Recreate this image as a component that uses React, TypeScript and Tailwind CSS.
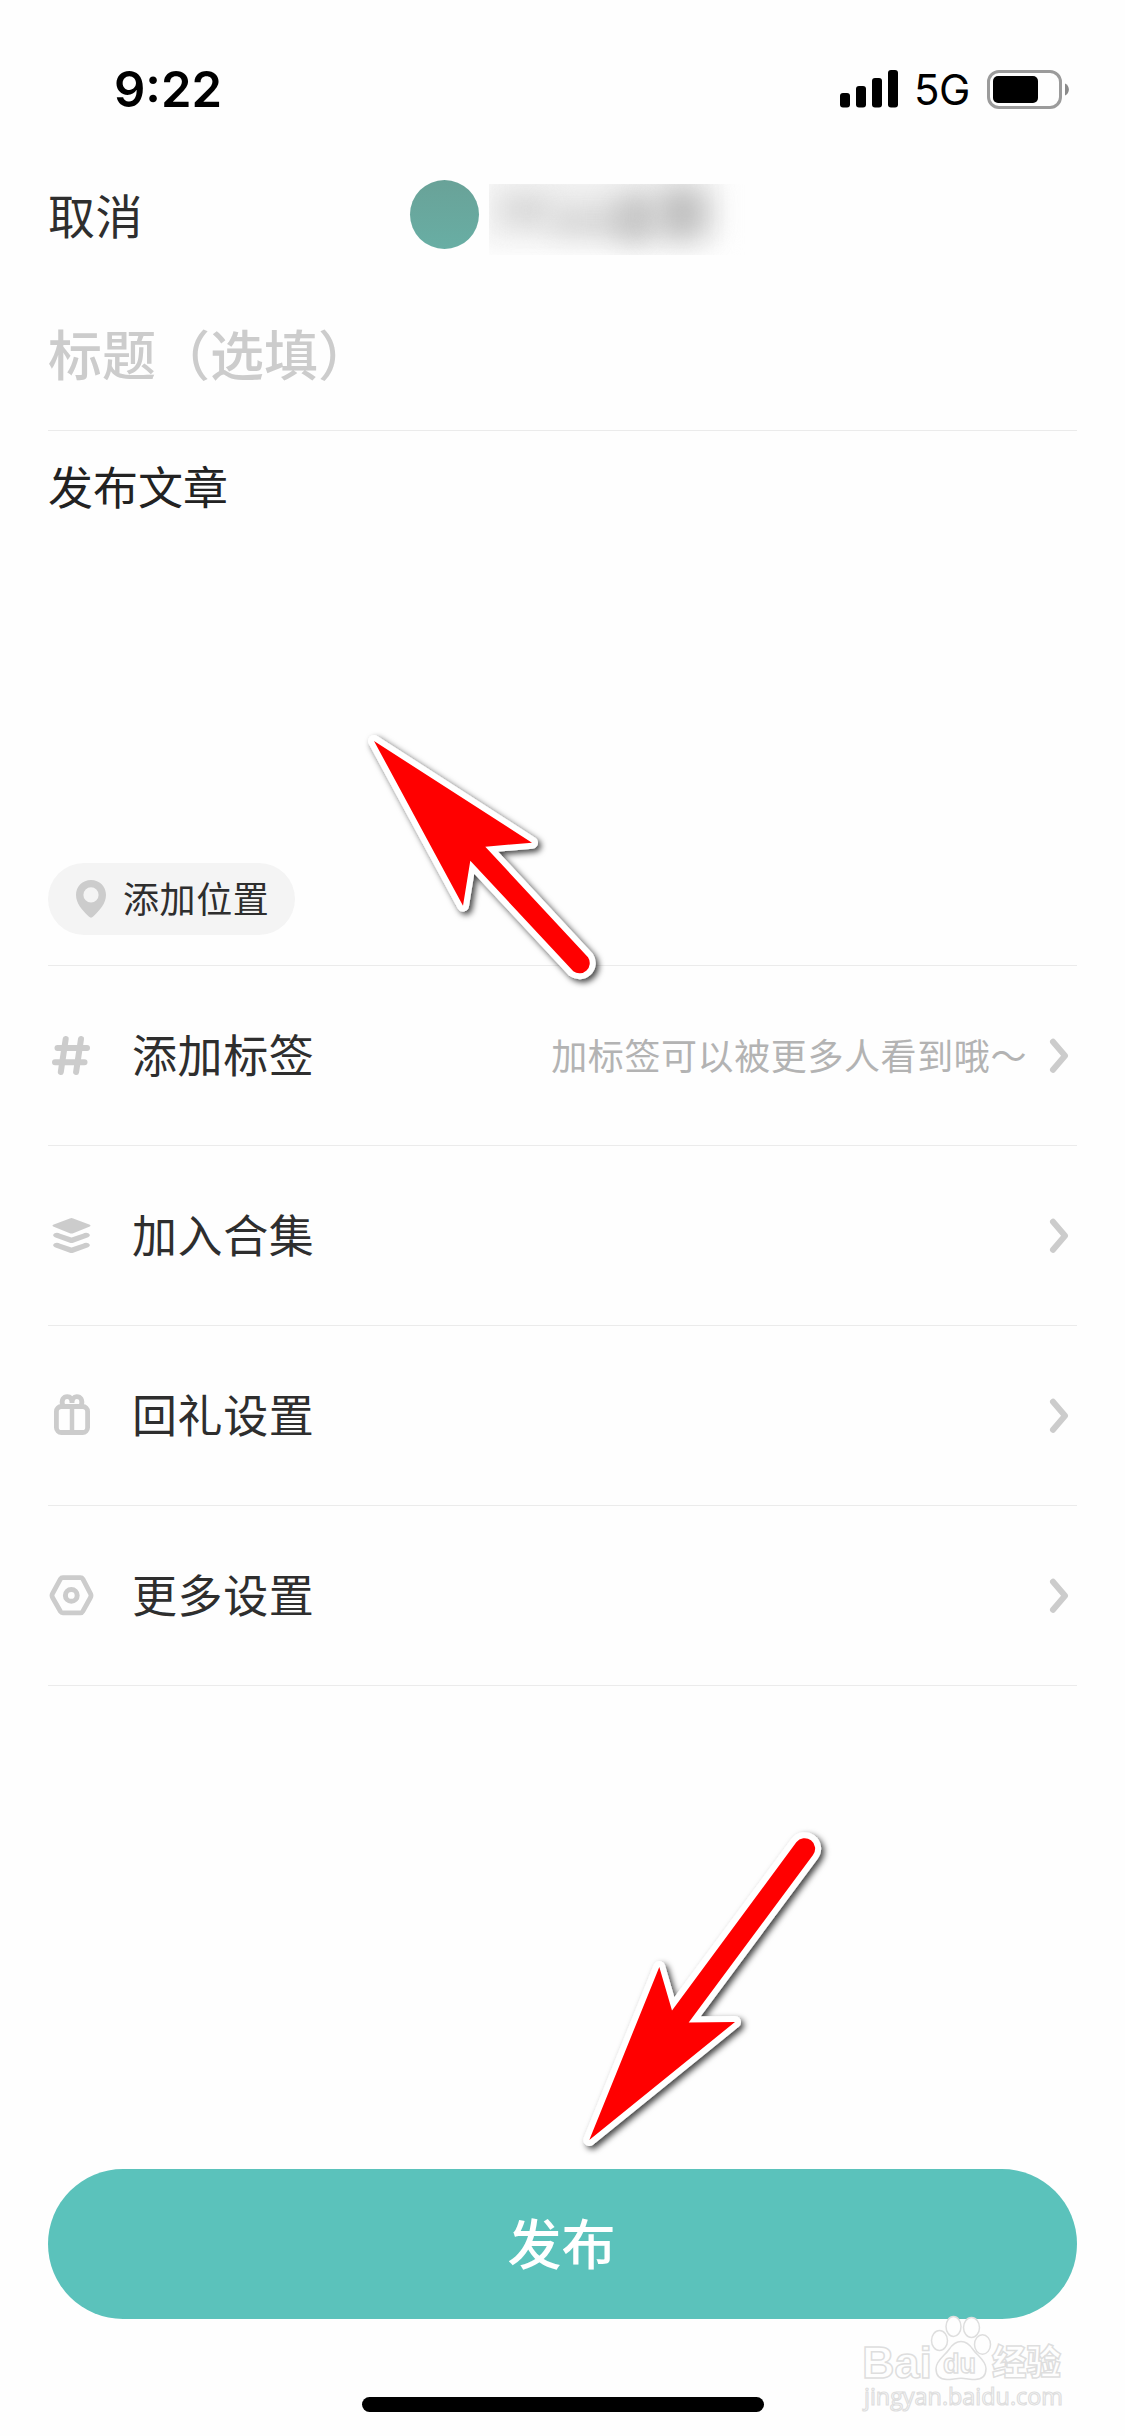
import type { ReactNode } from 'react'

const GRAY = '#cccccc'

function StatusBar() {
  return (
    <div className="flex h-[132px] shrink-0 items-start justify-between pt-[59px] pr-[56px] pl-[114px] text-black">
      <div className="pt-px font-[Inter,sans-serif] text-[49px] leading-[60px] font-semibold">9:22</div>
      <div className="flex h-[60px] items-center">
        <svg width="58" height="38" viewBox="0 0 58 38" fill="#000">
          <rect x="0" y="23" width="10" height="14.5" rx="3" />
          <rect x="16" y="16" width="10" height="21.5" rx="3" />
          <rect x="32" y="8" width="10" height="29.5" rx="3" />
          <rect x="48" y="0" width="10" height="37.5" rx="3" />
        </svg>
        <div className="ml-[16px] w-[57px] pt-[2px] font-[Inter,sans-serif] text-[42px] leading-[48px] tracking-[-0.500px]">5G</div>
        <svg className="ml-[16px]" width="82" height="39" viewBox="0 0 82 39">
          <rect x="1.5" y="1.5" width="72" height="36" rx="10.5" fill="none" stroke="#9b9b9b" strokeWidth="3" />
          <rect x="6" y="6" width="45" height="27" rx="5" fill="#000" />
          <path d="M78 13.5c5.200 2 5.200 10 0 12z" fill="#8a8a8a" />
        </svg>
      </div>
    </div>
  )
}

function Header() {
  return (
    <div className="flex h-[168px] shrink-0 items-start pl-[48px]">
      <div className="mt-[46px] w-[362px] text-[47px] leading-[72px] tracking-[0.600px] text-[#2e2e2e]">取消</div>
      <div className="mt-[48px] size-[69px] rounded-full bg-linear-to-b from-[#69a298] to-[#68aea4]" />
      <div className="relative mt-[52px] ml-[10px] h-[71px] w-[258px] overflow-hidden">
        <div className="absolute top-[-10px] left-[-6px] h-[70px] w-[236px] bg-[#efefef] blur-[12px]" />
        <div className="absolute top-[12px] left-[12px] h-[28px] w-[50px] rounded-full bg-[#d8d8d8] blur-[12px]" />
        <div className="absolute top-[24px] left-[60px] h-[26px] w-[90px] rounded-full bg-[#d6d6d6] blur-[13px]" />
        <div className="absolute top-[10px] left-[125px] h-[48px] w-[44px] rounded-full bg-[#c4c4c4] blur-[14px]" />
        <div className="absolute top-[2px] left-[168px] h-[54px] w-[50px] rounded-full bg-[#bebebe] blur-[14px]" />
      </div>
    </div>
  )
}

function PinIcon() {
  return (
    <svg width="30" height="38" viewBox="0 0 30 38">
      <path
        d="M15 0C6.500 0 0 6.600 0 15c0 8.500 6.500 15.500 12.800 21.500 1.500 1.500 2.900 1.500 4.400 0C23.500 30.500 30 23.500 30 15 30 6.600 23.500 0 15 0Zm0 7.300a7.600 7.600 0 1 1 0 15.200 7.600 7.600 0 0 1 0-15.200Z"
        fill={GRAY}
        fillRule="evenodd"
      />
    </svg>
  )
}

function HashIcon() {
  return (
    <svg width="46" height="46" viewBox="0 0 46 46" fill="none" stroke={GRAY} strokeWidth="6" strokeLinecap="round">
      <path d="M17.700 6 12.800 39M33 6l-4.900 33M9.500 15H39M7 29.200h29.500" />
    </svg>
  )
}

function LayersIcon() {
  return (
    <svg width="46" height="46" viewBox="0 0 46 46" fill={GRAY}>
      <path d="M21.800 5.400q1.700-.6 3.400 0l16 6.100q2.600 1.100 0 2.200l-16 6.500q-1.700.7-3.400 0l-16-6.500q-2.600-1.100 0-2.200z" />
      <path d="M6.200 20.600q2.800-1.600 6 .2l11.300 3.800 11.300-3.800q3.200-1.800 6-.2 2.400 2.200-.6 3.600l-15 5.500q-1.700.6-3.400 0l-15-5.500q-3-1.400-.6-3.600z" />
      <path d="M6.200 30.600q2.800-1.600 6 .2l11.300 3.800 11.300-3.800q3.200-1.800 6-.2 2.400 2.200-.6 3.600l-15 5.500q-1.700.6-3.400 0l-15-5.500q-3-1.400-.6-3.600z" />
    </svg>
  )
}

function GiftIcon() {
  return (
    <svg width="46" height="46" viewBox="0 0 46 46" fill="none" stroke={GRAY} strokeWidth="4.800">
      <rect x="8.400" y="13.500" width="31.200" height="26" rx="5" />
      <path d="M24 13.500v26" strokeWidth="4.500" />
      <path d="M14.800 13c-2-6.500 1-9.400 4.500-9.400 3 0 4.700 2.400 4.700 6.400 0-4 1.700-6.400 4.700-6.400 3.500 0 6.500 2.900 4.500 9.400" />
    </svg>
  )
}

function NutIcon() {
  return (
    <svg width="46" height="46" viewBox="0 0 46 46" fill="none" stroke={GRAY}>
      <path
        d="M14.800 4.600h17.700q1.500 0 2.300 1.300l7.700 14.800q1 1.900 0 3.800l-7.700 13.800Q34 39.800 32.500 39.800H14.800q-1.500 0-2.300-1.300L4.500 24.500q-1-1.900 0-3.800l8-14.800Q13.300 4.600 14.800 4.600Z"
        strokeWidth="4.800"
        strokeLinejoin="round"
      />
      <circle cx="23.300" cy="22.400" r="5.900" strokeWidth="5" />
    </svg>
  )
}

function Chevron() {
  return (
    <svg className="mr-[8px]" width="20" height="36" viewBox="0 0 20 36" fill="none" stroke={GRAY} strokeWidth="6" strokeLinecap="round" strokeLinejoin="round">
      <path d="M4 3.800 16 17.700 4 31.800" />
    </svg>
  )
}

function Row({ icon, label, hint }: { icon: ReactNode; label: string; hint?: string }) {
  return (
    <div className="flex h-[180px] shrink-0 items-center border-b border-[#ebebeb]">
      {icon}
      <div className="ml-[38px] flex-1 pb-1 text-[45px] leading-[64px] tracking-[0.600px] text-[#2e2e2e]">{label}</div>
      {hint && <div className="mr-[22px] pb-[3px] text-[36px] leading-[52px] tracking-[0.600px] text-[#b3b3b3]">{hint}</div>}
      <Chevron />
    </div>
  )
}

function Arrow({ d }: { d: string }) {
  return (
    <g>
      <path d={d} fill="#fff" stroke="#fff" strokeWidth="12" strokeLinejoin="round" filter="url(#arrow-shadow)" />
      <path d={d} fill="#ff0000" />
    </g>
  )
}

function Annotations() {
  return (
    <svg className="pointer-events-none absolute inset-0" width="1125" height="2436" viewBox="0 0 1125 2436">
      <defs>
        <filter id="arrow-shadow" x="-20%" y="-20%" width="140%" height="140%">
          <feDropShadow dx="3" dy="3" stdDeviation="3" floodColor="#000" floodOpacity="0.75" />
        </filter>
      </defs>
      <Arrow d="M374 741 532 842.700 485.300 846.700 588 957.300A10.300 10.300 0 0 1 573.300 971.300L470.300 860.700 463 905.700Z" />
      <Arrow d="M589.300 2140 659.300 1967 672 2010.500 796.300 1842.300A10.400 10.400 0 0 1 813 1855L688.700 2022.500 735 2022Z" />
    </svg>
  )
}

function Watermark() {
  return (
    <svg
      className="pointer-events-none absolute top-[2310px] left-[856px]"
      width="220"
      height="110"
      viewBox="0 0 220 110"
      fill="#fefefe"
      stroke="#dedede"
      strokeWidth="1.500"
    >
      <text x="6" y="68" fontFamily="Liberation Sans, sans-serif" fontWeight="700" fontSize="45" textLength="70" lengthAdjust="spacingAndGlyphs">Bai</text>
      <ellipse cx="83.500" cy="30.500" rx="8" ry="10" />
      <ellipse cx="97.500" cy="16.500" rx="7.500" ry="10" />
      <ellipse cx="115.500" cy="17.500" rx="8" ry="10" />
      <ellipse cx="126.500" cy="34.500" rx="8" ry="9.700" />
      <path d="M105 31.500c6 0 9 3.500 12 8 4 6 13 11 13 19 0 7-4 11-11 11-5 0-9-1.200-14-1.200s-9 1.200-14 1.200c-7 0-11-4-11-11 0-8 9-13 13-19 3-4.500 6-8 12-8Z" />
      <text x="87" y="63" fontFamily="Liberation Sans, sans-serif" fontSize="28" fontWeight="700" textLength="33" lengthAdjust="spacingAndGlyphs">du</text>
      <text x="136" y="65" fontFamily="Noto Sans CJK SC, sans-serif" fontSize="35" fontWeight="900" textLength="69" lengthAdjust="spacingAndGlyphs">经验</text>
      <text x="8" y="95" fontFamily="Open Sans, sans-serif" fontSize="23" fontWeight="400" strokeWidth="1.200" textLength="199" lengthAdjust="spacingAndGlyphs">jingyan.baidu.com</text>
    </svg>
  )
}

export default function App() {
  return (
    <div className="relative flex h-[2436px] w-[1125px] flex-col overflow-hidden bg-[#fefefe] font-['Noto_Sans_CJK_SC',sans-serif]">
      <StatusBar />
      <Header />
      <div className="mx-[48px] flex flex-1 flex-col">
        <div className="h-[131px] shrink-0 border-b border-[#ebebeb] pt-[15px] text-[54px] leading-[76px] font-medium text-[#cccccc]">
          标题（选填）
        </div>
        <div className="h-[432px] shrink-0 pt-[23px] text-[45px] leading-[64px] text-[#222222]">发布文章</div>
        <div className="h-[103px] shrink-0 border-b border-[#ebebeb]">
          <div className="flex h-[72px] w-[247px] items-center rounded-full bg-[#f4f4f4] pl-[28px]">
            <PinIcon />
            <span className="ml-[17px] pb-[5px] text-[36px] leading-[52px] tracking-[0.600px] text-[#2e2e2e]">添加位置</span>
          </div>
        </div>
        <Row icon={<HashIcon />} label="添加标签" hint="加标签可以被更多人看到哦～" />
        <Row icon={<LayersIcon />} label="加入合集" />
        <Row icon={<GiftIcon />} label="回礼设置" />
        <Row icon={<NutIcon />} label="更多设置" />
        <button className="mt-auto mb-[78px] flex h-[150px] shrink-0 items-center justify-center rounded-full bg-[#5bc2bb] pr-[2px] pb-[5px] text-[54px] leading-[76px] font-medium text-white">
          发布
        </button>
      </div>
      <div className="mb-[24px] ml-[362px] h-[15px] w-[402px] shrink-0 rounded-full bg-black" />
      <Annotations />
      <Watermark />
    </div>
  )
}
